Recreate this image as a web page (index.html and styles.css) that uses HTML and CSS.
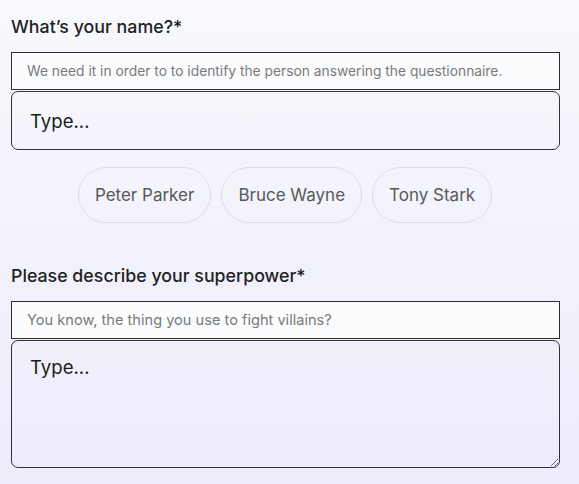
FILE: index.html
```html
<!DOCTYPE html>
<html>
<head>
<meta charset="utf-8">
<link rel="stylesheet" href="styles.css">
</head>
<body>
<form class="form">
  <section class="field">
    <label class="label" for="name">What’s your name?*</label>
    <div class="hint">We need it in order to to identify the person answering the questionnaire.</div>
    <input id="name" class="input" type="text" placeholder="Type...">
    <div class="chips">
      <button type="button" class="chip">Peter Parker</button>
      <button type="button" class="chip">Bruce Wayne</button>
      <button type="button" class="chip">Tony Stark</button>
    </div>
  </section>
  <section class="field field-second">
    <label class="label" for="power">Please describe your superpower*</label>
    <div class="hint hint-wide">You know, the thing you use to fight villains?</div>
    <textarea id="power" class="input textarea" placeholder="Type..."></textarea>
  </section>
</form>
</body>
</html>
```
FILE: styles.css
```css
html, body {
  margin: 0;
  height: 100%;
}
body {
  background: linear-gradient(180deg, #f7f9fd 0%, #f1f1fb 60%, #eeecfa 100%);
  font-family: Inter, "Noto Sans", sans-serif;
  color: #1c1c1c;
}
.form {
  width: 549px;
  padding: 17px 0 0 11px;
  display: flex;
  flex-direction: column;
}
.field {
  display: flex;
  flex-direction: column;
}
.field-second {
  margin-top: 43px;
}
.label {
  font-size: 17.8px;
  font-weight: 500;
  line-height: 20px;
  margin-bottom: 15px;
  color: #222;
}
.hint {
  box-sizing: border-box;
  height: 38px;
  border: 1px solid #2e2e2e;
  background: #fbfcfe;
  padding: 0 15px;
  display: flex;
  align-items: center;
  font-size: 13.8px;
  color: #7a7a7a;
  white-space: nowrap;
}
.hint-wide {
  font-size: 14.6px;
}
.input {
  box-sizing: border-box;
  margin: 1px 0 0;
  width: 100%;
  height: 59px;
  border: 1px solid #333;
  border-radius: 7px;
  background: transparent;
  padding: 0 18px;
  font-family: inherit;
  font-size: 18.6px;
  color: #1c1c1c;
  outline: none;
}
.input::placeholder {
  color: #1c1c1c;
}
.textarea {
  height: 128px;
  padding: 15px 18px;
  resize: vertical;
  display: block;
  line-height: 22px;
}
.chips {
  display: flex;
  justify-content: center;
  gap: 10px;
  margin-top: 17px;
  padding-right: 1px;
}
.chip {
  height: 56px;
  padding: 0 16px;
  border: 1px solid #dcdde6;
  border-radius: 28px;
  background: transparent;
  font-family: inherit;
  font-size: 17px;
  color: #585858;
}
```
